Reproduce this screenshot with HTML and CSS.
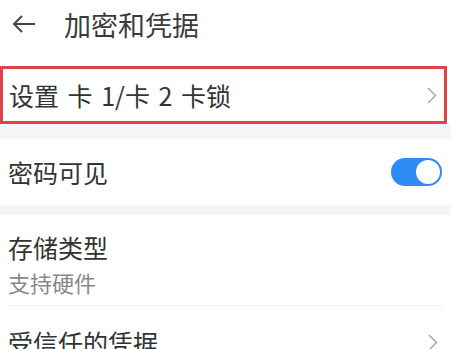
FILE: index.html
```html
<!DOCTYPE html>
<html lang="zh-CN">
<head>
  <meta charset="UTF-8">
  <meta name="viewport" content="width=device-width, initial-scale=1.0">
  <title>加密和凭据</title>
  <link rel="stylesheet" href="styles.css">
</head>
<body>
  <div class="page">
    <!-- Header -->
    <div class="header">
      <svg class="back" width="24" height="20" viewBox="0 0 24 20">
        <path d="M23 10H2M10 2L2 10l8 8" fill="none" stroke="#444" stroke-width="2" stroke-linejoin="miter"/>
      </svg>
      <h1>加密和凭据</h1>
    </div>

    <!-- SIM lock -->
    <div class="row row-lock">
      <span class="label">设置 卡 1/卡 2 卡锁</span>
      <svg class="chevron" width="10" height="17" viewBox="0 0 10 17">
        <path d="M1 1l7.5 7.5L1 16" fill="none" stroke="#aaa" stroke-width="1.5"/>
      </svg>
    </div>

    <div class="gap gap-big"></div>

    <!-- Password visible -->
    <div class="row row-toggle">
      <span class="label">密码可见</span>
      <div class="switch on"><div class="knob"></div></div>
    </div>

    <div class="gap"></div>

    <!-- Storage type -->
    <div class="row row-storage">
      <div class="label">存储类型</div>
      <div class="sub">支持硬件</div>
    </div>
    <div class="divider"></div>

    <!-- Trusted credentials -->
    <div class="row row-trusted">
      <span class="label">受信任的凭据</span>
      <svg class="chevron" width="10" height="17" viewBox="0 0 10 17">
        <path d="M1 1l7.5 7.5L1 16" fill="none" stroke="#aaa" stroke-width="1.5"/>
      </svg>
    </div>
  </div>
</body>
</html>
```

FILE: styles.css
```css
* {
  box-sizing: border-box;
  margin: 0;
  padding: 0;
}

body {
  width: 451px;
  height: 349px;
  overflow: hidden;
  background: #fff;
  font-family: "Noto Sans CJK SC", "Noto Sans", sans-serif;
  color: #333;
}

.header {
  height: 66px;
  display: flex;
  align-items: center;
  padding-left: 12px;
  padding-bottom: 18px;
}

.back {
  display: block;
  margin-right: 28px;
}

h1 {
  font-size: 27px;
  font-weight: normal;
  color: #3a3a3a;
  line-height: 1;
}

.row {
  display: flex;
  align-items: center;
  justify-content: space-between;
  padding: 0 13px 0 8px;
}

.label {
  font-size: 25px;
  line-height: 1;
  color: #333;
}

.row-lock {
  width: 447px;
  height: 58px;
  border: 3px solid #e0414b;
  padding: 0 7px 0 6px;
}

.row-lock .label {
  word-spacing: 3px;
}

.gap {
  height: 10px;
  background: #f5f5f5;
}

.gap-big {
  height: 15px;
}

.row-toggle {
  height: 66px;
  padding-right: 9px;
}

.switch {
  width: 51px;
  height: 28px;
  border-radius: 14px;
  background: #e0e0e0;
  padding: 2px;
  display: flex;
}

.switch.on {
  background: #2f8bf5;
  justify-content: flex-end;
}

.knob {
  width: 24px;
  height: 24px;
  border-radius: 50%;
  background: #fff;
}

.row-storage {
  height: 90px;
  flex-direction: column;
  align-items: flex-start;
  justify-content: flex-start;
  padding-top: 20px;
}

.sub {
  font-size: 22px;
  line-height: 1;
  color: #888;
  margin-top: 11px;
}

.divider {
  height: 1px;
  background: #ececec;
  margin: 0 9px 0 9px;
}

.row-trusted {
  height: 66px;
  padding-top: 6px;
}
```
